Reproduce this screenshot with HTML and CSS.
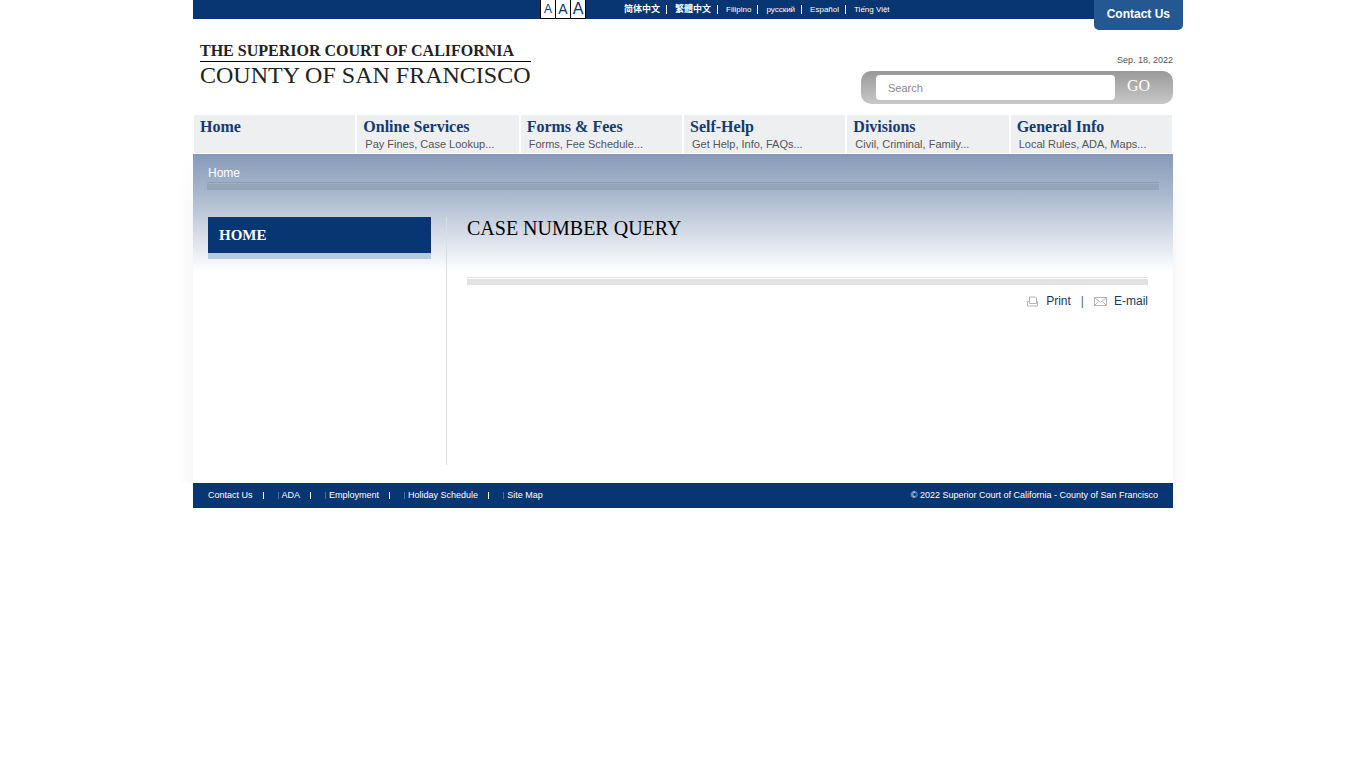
FILE: index.html
```html
<!doctype html>
<html lang="en">
<head>
    <meta charset="utf-8">
    <meta name="viewport" content="width=device-width">
    <title>Case Number Query</title>

    <link rel="stylesheet" href="styles.css">
</head>
<body>

<div class="page">
    <div class="topbar">
        <div class="text-size">
            <button class="size size_small" type="button">A</button>
            <button class="size size_medium" type="button">A</button>
            <button class="size size_large" type="button">A</button>
        </div>
        <ul class="languages">
            <li><a class="cjk" href="#" lang="zh-Hans">简体中文</a></li>
            <li><a class="cjk" href="#" lang="zh-Hant">繁體中文</a></li>
            <li><a href="#">Filipino</a></li>
            <li><a href="#">русский</a></li>
            <li><a href="#">Español</a></li>
            <li><a href="#">Tiếng Việt</a></li>
        </ul>
        <a class="contact-tab" href="#">Contact Us</a>
    </div>

    <header class="header">
        <a class="logo" href="#">
            <span class="logo-court">THE SUPERIOR COURT OF CALIFORNIA</span>
            <span class="logo-county">COUNTY OF SAN FRANCISCO</span>
        </a>
        <div class="header-side">
            <div class="date">Sep. 18, 2022</div>
            <form class="search">
                <input class="search-text" type="text" placeholder="Search" aria-label="Search">
                <button class="search-go" type="submit">GO</button>
            </form>
        </div>
    </header>

    <nav class="nav">
        <a class="nav-item" href="#"><b>Home</b></a>
        <a class="nav-item" href="#"><b>Online Services</b><span>Pay Fines, Case Lookup...</span></a>
        <a class="nav-item" href="#"><b>Forms &amp; Fees</b><span>Forms, Fee Schedule...</span></a>
        <a class="nav-item" href="#"><b>Self-Help</b><span>Get Help, Info, FAQs...</span></a>
        <a class="nav-item" href="#"><b>Divisions</b><span>Civil, Criminal, Family...</span></a>
        <a class="nav-item" href="#"><b>General Info</b><span>Local Rules, ADA, Maps...</span></a>
    </nav>

    <main class="main">
        <div class="breadcrumb"><a href="#">Home</a></div>
        <div class="columns">
            <aside class="sidebar">
                <a class="sidebar-title" href="#">HOME</a>
            </aside>
            <section class="content">
                <h1 class="title">CASE NUMBER QUERY</h1>
                <div class="tools">
                    <a class="tool" href="#">
                        <svg width="12" height="11" viewBox="0 0 12 11" fill="none" stroke="#b5b5b5">
                            <path d="M2.500 7.500v-6.500h6l1 1v5.500M2.500 5.500h-2v4.500h10v-4.500h-1M2.500 7.500h7"/>
                        </svg>
                        Print
                    </a>
                    <span class="tools-line">|</span>
                    <a class="tool" href="#">
                        <svg width="13" height="9" viewBox="0 0 13 9" fill="none" stroke="#b5b5b5">
                            <path d="M.5.5h12v8H.5zM.5.5l6 5 6-5M.5 8.5l4-4M12.500 8.500l-4-4"/>
                        </svg>
                        E-mail
                    </a>
                </div>
            </section>
        </div>
    </main>

    <footer class="footer">
        <ul class="footer-links">
            <li><a href="#">Contact Us</a></li>
            <li><a href="#">ADA</a></li>
            <li><a href="#">Employment</a></li>
            <li><a href="#">Holiday Schedule</a></li>
            <li><a href="#">Site Map</a></li>
        </ul>
        <div>© 2022 Superior Court of California - County of San Francisco</div>
    </footer>
</div>

</body>
</html>
```

FILE: styles.css
```css
html, body {
    margin: 0;
    padding: 0;
    color: #000;
    background: #fff;
    font: 12px/16px "Liberation Sans", Arial, sans-serif;
}

a {
    color: inherit;
    text-decoration: none;
}

ul {
    list-style: none;
    margin: 0;
    padding: 0;
}

.page {
    max-width: 980px;
    margin: 0 auto;
}

/* top bar */
.topbar {
    position: relative;
    display: flex;
    height: 19px;
    padding-left: 347px;
    color: #fff;
    background: #073672;
}
.text-size {
    display: flex;
    margin-right: 38px;
}
.size {
    width: 15px;
    height: 19px;
    padding: 0;
    border: 1px solid #000;
    border-width: 0 1px 1px 0;
    color: #073672;
    background: #fff;
    font-family: inherit;
    line-height: 16px;
    cursor: pointer;
}
    .size_small {
        width: 16px;
        border-left-width: 1px;
        font-size: 12px;
        line-height: 14px;
    }
    .size_medium {font-size: 14px;}
    .size_large {font-size: 16px;}
.languages {
    display: flex;
    font-size: 8px;
    line-height: 19px;
}
.languages li {
    display: flex;
    align-items: center;
}
    .languages li + li::before {
        content: "";
        width: 1px;
        height: 9px;
        margin: 0 8px 0 6px;
        background: #fff;
    }
    .languages .cjk {
        padding-bottom: 2px;
        font: bold 9px/16px "Liberation Sans", "Noto Sans CJK SC", sans-serif;
    }
.contact-tab {
    position: absolute;
    top: 0;
    right: -10px;
    padding: 6px 13px 8px;
    border-radius: 0 0 5px 5px;
    background: #255892;
    font-weight: bold;
}

/* header */
.header {
    display: flex;
    justify-content: space-between;
    height: 96px;
}
.logo {
    padding: 22px 0 0 7px;
    color: #222;
    font-family: "Liberation Serif", "Times New Roman", serif;
}
.logo span {
    display: block;
}
    .logo-court {
        border-bottom: 1px solid #000;
        font-size: 16px;
        font-weight: bold;
        line-height: 20px;
    }
    .logo-county {
        font-size: 24px;
        line-height: 26px;
    }
.header-side {
    width: 312px;
    padding-top: 33px;
}
.date {
    margin-bottom: 3px;
    color: #555;
    font-size: 9px;
    text-align: right;
}
.search {
    display: flex;
    height: 25px;
    padding: 4px 15px;
    border-radius: 10px;
    background: linear-gradient(#999, #c8c8c8);
}
.search-text {
    flex: 1;
    min-width: 0;
    padding: 0 12px;
    border: 0;
    border-radius: 4px;
    background: #fff;
    font: 11px "Liberation Sans", Arial, sans-serif;
}
    .search-text::placeholder {color: #888;}
.search-go {
    width: 43px;
    padding: 0 0 4px 4px;
    border: 0;
    color: #fff;
    background: none;
    font: 16px "Liberation Serif", "Times New Roman", serif;
    cursor: pointer;
}

/* main menu */
.nav {
    display: grid;
    grid-template-columns: repeat(6, 1fr);
    column-gap: 2px;
    padding: 0 1px 1px;
}
.nav-item {
    height: 34px;
    padding: 4px 0 0 6px;
    color: #555;
    background: #edeff1;
    font-size: 11px;
}
    .nav-item b {
        display: block;
        color: #153a70;
        font: bold 16px/16px "Liberation Serif", "Times New Roman", serif;
    }
    .nav-item span {
        display: block;
        padding-left: 2px;
        line-height: 18px;
    }

/* page body */
.main {
    position: relative;
    padding: 11px 14px 18px;
    background: linear-gradient(#869ab8, #a9b8cd 40px, #fff 118px);
}
    .main::before,
    .main::after {
        content: "";
        position: absolute;
        top: 0;
        bottom: 0;
        width: 15px;
        background: linear-gradient(#fff, transparent 60px), linear-gradient(to left, #f7f7f7, #fff);
    }
    .main::before {right: 100%;}
    .main::after {
        left: 100%;
        transform: scaleX(-1);
    }
.breadcrumb {
    padding: 0 1px 1px;
    color: #fff;
}
    .breadcrumb::after {
        content: "";
        display: block;
        height: 6px;
        margin: 1px -1px 0;
        padding-top: 1px;
        border-top: 1px solid #8c9db3;
        background: #95a5b7 content-box;
    }
.columns {
    display: flex;
    min-height: 248px;
    padding: 26px 11px 0 1px;
}
.sidebar {
    width: 223px;
    padding-right: 15px;
    border-right: 1px solid #dadde2;
}
.sidebar-title {
    display: block;
    padding-left: 11px;
    border-bottom: 6px solid #b8cbe2;
    color: #fff;
    background: #073672;
    font: bold 15px/36px "Liberation Serif", "Times New Roman", serif;
}
.content {
    flex: 1;
    padding-left: 20px;
}
.title {
    margin: 0;
    padding-bottom: 38px;
    font: 20px/22px "Liberation Serif", "Times New Roman", serif;
}
.tools {
    display: flex;
    flex-wrap: wrap;
    justify-content: flex-end;
    border-top: 1px solid #e2e2e2;
    color: #133a5e;
}
    .tools::before {
        content: "";
        width: 100%;
        height: 6px;
        margin: 1px 0 8px;
        background: #e2e2e2;
    }
.tools-line {
    margin: 0 10px;
    color: #4c6b4c;
}
.tool {
    display: flex;
    align-items: center;
}
    .tool svg {margin-right: 7px;}

/* footer */
.footer {
    display: flex;
    justify-content: space-between;
    padding: 0 15px;
    color: #fff;
    background: #073672;
    font-size: 9px;
    line-height: 25px;
}
.footer-links {
    display: flex;
}
.footer-links li {
    display: flex;
    align-items: center;
}
    .footer-links li + li::before {
        content: "";
        width: 14px;
        height: 7px;
        margin: 0 3px 0 10px;
        border: solid #4c6f9a;
        border-width: 0 1px;
        border-left-color: #fff;
    }
```
